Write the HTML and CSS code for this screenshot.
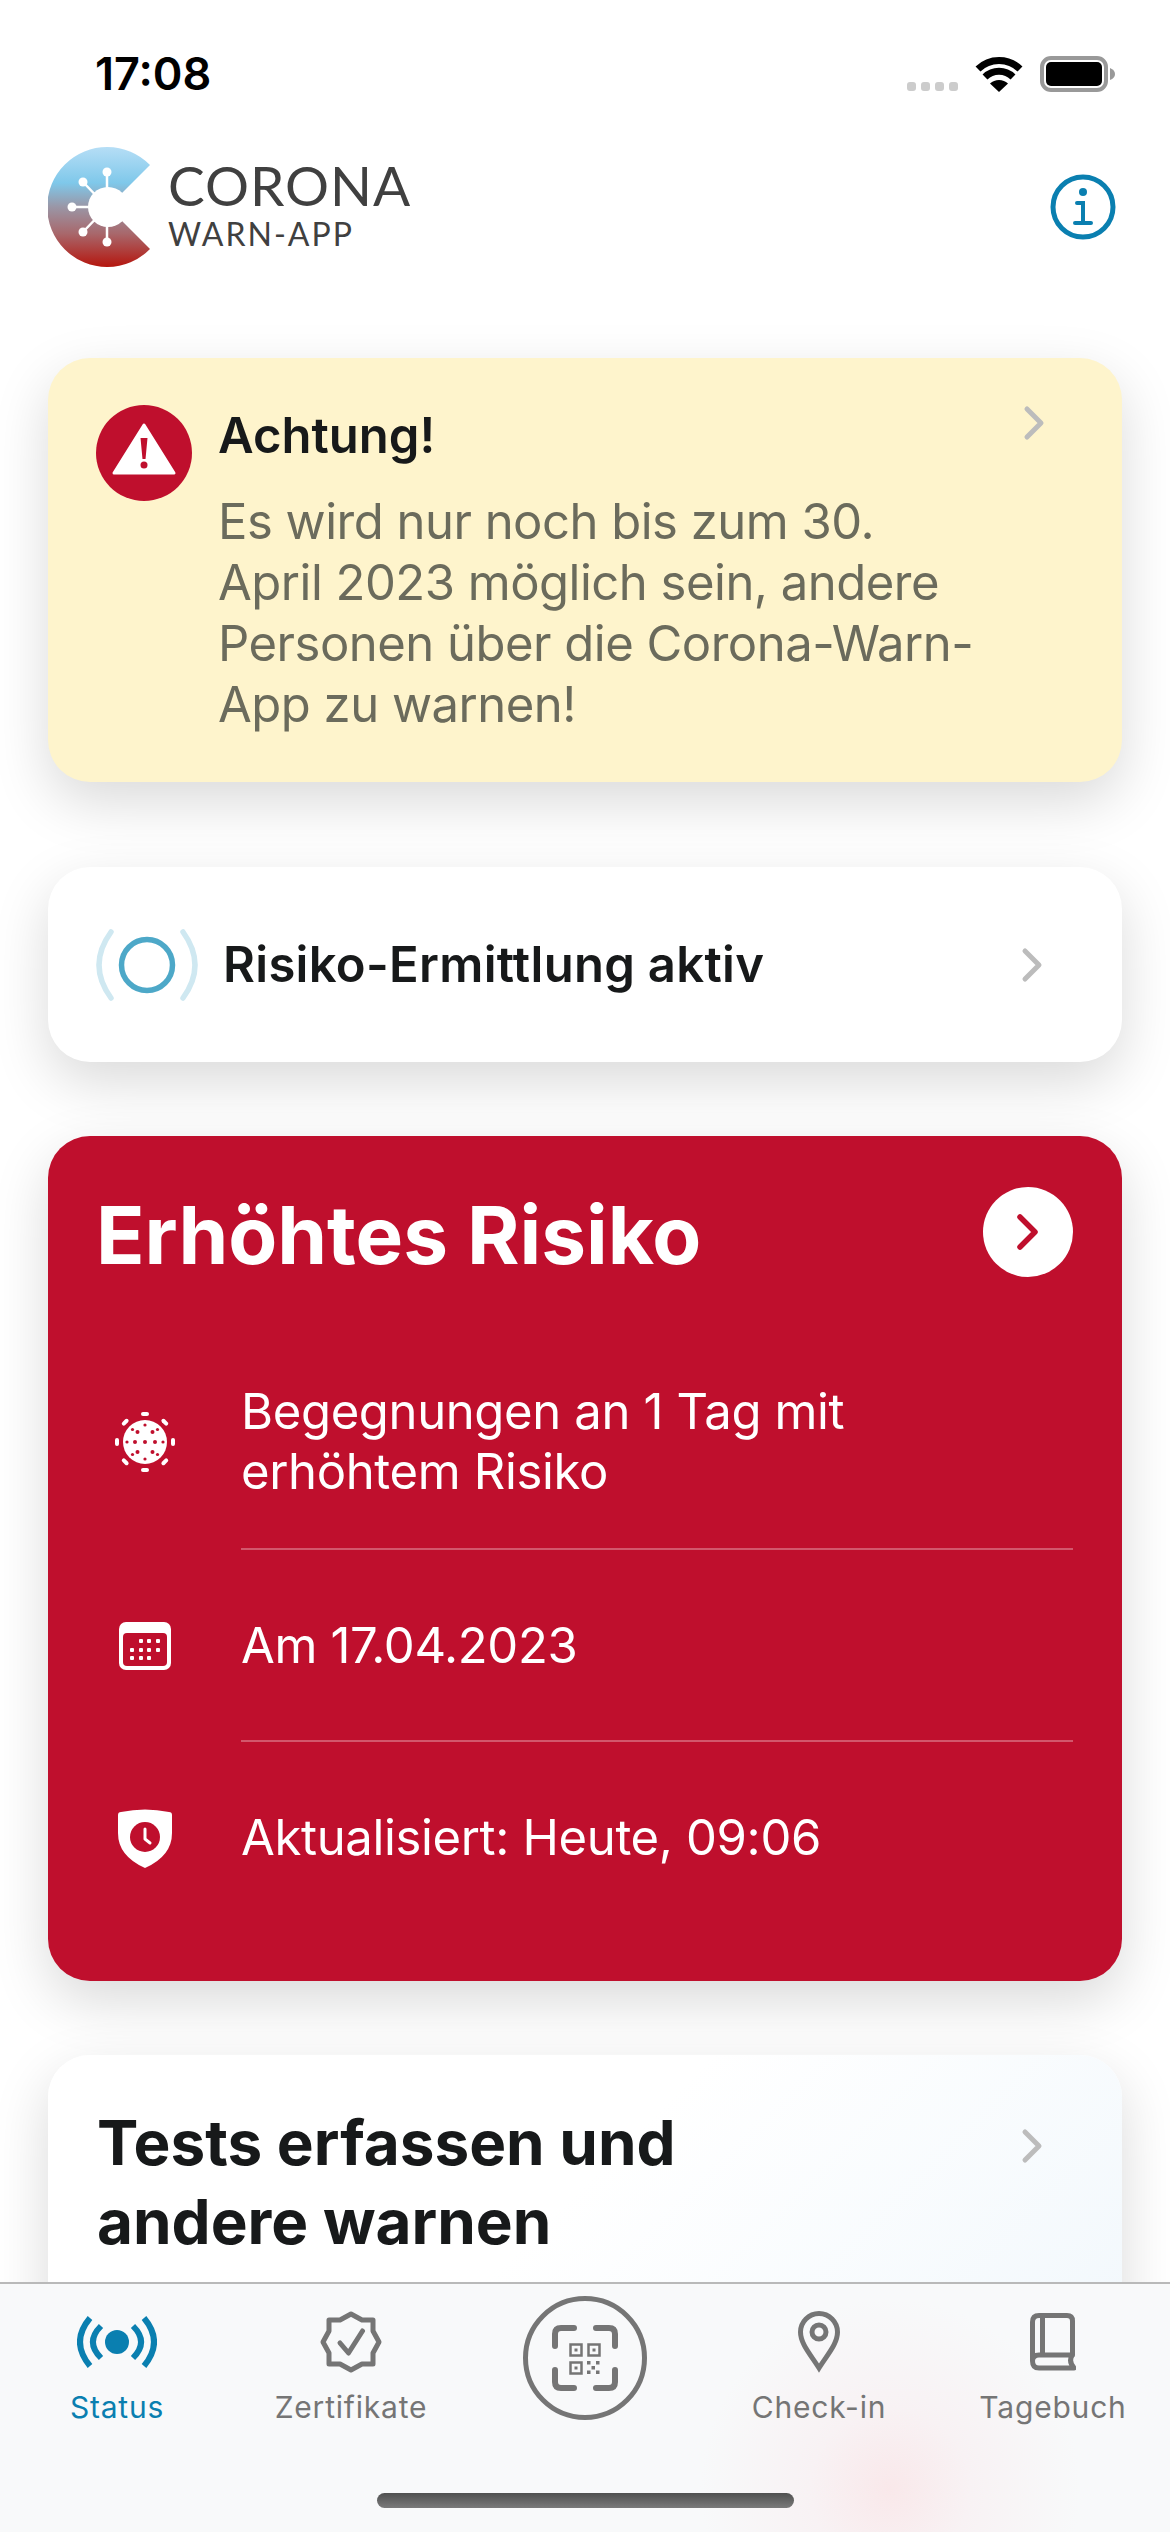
FILE: index.html
```html
<!DOCTYPE html>
<html lang="de">
<head>
    <meta charset="UTF-8">
    <title>Corona-Warn-App</title>
    <link rel="stylesheet" href="styles.css">
</head>
<body>

<div class="status-bar">
    <span class="clock">17:08</span>
    <div class="status-icons">
        <div class="signal"><i></i><i></i><i></i><i></i></div>
        <svg width="48" height="36" viewBox="0 0 48 36">
            <path d="M3 13A30 30 0 0 1 45 13M10 21A20 20 0 0 1 38 21" fill="none" stroke="#000" stroke-width="7"/>
            <path d="M15 27.500A13 13 0 0 1 33 27.500L24 36Z"/>
        </svg>
        <svg width="75" height="36" viewBox="0 0 75 36">
            <rect x="2" y="2" width="64" height="32" rx="9" fill="none" stroke="#999" stroke-width="4"/>
            <rect x="6" y="6" width="56" height="24" rx="5"/>
            <path d="M70 12Q75 14 75 18Q75 22 70 24Z" fill="#999"/>
        </svg>
    </div>
</div>

<header class="app-header">
    <div class="logo">
        <svg width="124" height="120" viewBox="0 0 124 120">
            <defs>
                <linearGradient id="logoFill" x1="0" y1="0" x2="0" y2="1">
                    <stop offset="0" stop-color="#b6def6"/>
                    <stop offset="0.3" stop-color="#7fc8ea"/>
                    <stop offset="0.5" stop-color="#9a96a6"/>
                    <stop offset="0.72" stop-color="#a8686c"/>
                    <stop offset="1" stop-color="#b5160e"/>
                </linearGradient>
            </defs>
            <path d="M102 18A60 60 0 1 0 102 102L60 60Z" fill="url(#logoFill)"/>
            <circle cx="60" cy="60" r="20" fill="#fff"/>
            <path d="M59 60V25M59 60L35 35M59 60H24M59 60L35 85M59 60V95" stroke="#fff" stroke-width="2.500"/>
            <g fill="#fff">
                <circle cx="59" cy="25" r="4.500"/>
                <circle cx="35" cy="35" r="4.500"/>
                <circle cx="24" cy="60" r="4.500"/>
                <circle cx="35" cy="85" r="4.500"/>
                <circle cx="59" cy="95" r="4.500"/>
            </g>
        </svg>
        <div class="logo-text">
            <div class="logo-name">CORONA</div>
            <div class="logo-sub">WARN-APP</div>
        </div>
    </div>
    <svg width="66" height="66" viewBox="-33 -33 66 66" fill="none" stroke="#0a7fb0" stroke-width="5">
        <circle r="30"/>
        <path d="M-6 -4H0V16M-8 16H8" stroke-width="4" stroke-linecap="round"/>
        <circle cy="-15" r="4" fill="#0a7fb0" stroke="none"/>
    </svg>
</header>

<main class="cards">
    <section class="card card-notice">
        <svg class="notice-icon" width="96" height="96" viewBox="0 0 96 96">
            <circle cx="48" cy="48" r="48" fill="#bf0f2d"/>
            <path d="M48 20L78 68H18Z" fill="#fff" stroke="#fff" stroke-width="3" stroke-linejoin="round"/>
            <path d="M44.500 33H51.500L49.500 54H46.500Z" fill="#bf0f2d"/>
            <circle cx="48" cy="60" r="3.500" fill="#bf0f2d"/>
        </svg>
        <div class="notice-text">
            <h3>Achtung!</h3>
            <p>Es wird nur noch bis zum 30.<br>April 2023 möglich sein, andere<br>Personen über die Corona-Warn-<br>App zu warnen!</p>
        </div>
        <svg class="chevron" width="24" height="36" viewBox="0 0 24 36">
            <path d="M5 4L19 18L5 32" fill="none" stroke="#bcbcbc" stroke-width="5" stroke-linecap="round" stroke-linejoin="round"/>
        </svg>
    </section>

    <section class="card card-tracing">
        <svg width="102" height="72" viewBox="0 0 102 72" fill="none">
            <circle cx="51" cy="36" r="25.500" stroke="#4da8c8" stroke-width="5.500"/>
            <path d="M15 3Q-9 36 15 69M87 3Q111 36 87 69" stroke="#cfe8f1" stroke-width="5.500" stroke-linecap="round"/>
        </svg>
        <span class="tracing-label">Risiko-Ermittlung aktiv</span>
        <svg class="chevron" width="24" height="36" viewBox="0 0 24 36">
            <path d="M5 4L19 18L5 32" fill="none" stroke="#bcbcbc" stroke-width="5" stroke-linecap="round" stroke-linejoin="round"/>
        </svg>
    </section>

    <section class="card card-risk">
        <div class="risk-head">
            <h2>Erhöhtes Risiko</h2>
            <div class="risk-button">
                <svg width="24" height="38" viewBox="0 0 24 38">
                    <path d="M4 4L19 19L4 34" fill="none" stroke="#bf0f2d" stroke-width="5.500" stroke-linecap="round" stroke-linejoin="round"/>
                </svg>
            </div>
        </div>

        <div class="risk-row risk-row-tall">
            <div class="risk-icon">
                <svg width="60" height="60" viewBox="-30 -30 60 60" fill="#fff">
                    <circle r="22"/>
                    <g>
                        <rect x="-4" y="-30" width="8" height="4" rx="2"/>
                        <rect x="-4" y="26" width="8" height="4" rx="2"/>
                        <rect x="-30" y="-4" width="4" height="8" rx="2"/>
                        <rect x="26" y="-4" width="4" height="8" rx="2"/>
                        <rect x="-4" y="-30" width="8" height="4" rx="2" transform="rotate(45)"/>
                        <rect x="-4" y="-30" width="8" height="4" rx="2" transform="rotate(135)"/>
                        <rect x="-4" y="-30" width="8" height="4" rx="2" transform="rotate(225)"/>
                        <rect x="-4" y="-30" width="8" height="4" rx="2" transform="rotate(315)"/>
                    </g>
                    <g fill="#bf0f2d">
                        <circle r="2"/><circle cx="-10" r="2"/><circle cx="10" r="2"/><circle cx="-18" r="1.600"/><circle cx="18" r="1.600"/>
                        <circle cy="-10" cx="-7.500" r="2"/><circle cy="-10" cx="7.500" r="2"/><circle cy="10" cx="-7.500" r="2"/><circle cy="10" cx="7.500" r="2"/>
                        <circle cy="-17" r="1.600"/><circle cy="17" r="1.600"/>
                        <circle cx="-12.500" cy="-12.500" r="1.600"/><circle cx="12.500" cy="-12.500" r="1.600"/><circle cx="-12.500" cy="12.500" r="1.600"/><circle cx="12.500" cy="12.500" r="1.600"/>
                    </g>
                </svg>
            </div>
            <div class="risk-text">Begegnungen an 1 Tag mit<br>erhöhtem Risiko</div>
        </div>

        <div class="risk-row">
            <div class="risk-icon">
                <svg width="52" height="48" viewBox="0 0 52 48">
                    <rect width="52" height="48" rx="7" fill="#fff"/>
                    <rect x="4" y="11" width="44" height="33" rx="4" fill="#bf0f2d"/>
                    <g fill="#fff">
                        <rect x="20" y="17" width="4" height="4" rx="1"/><rect x="28" y="17" width="4" height="4" rx="1"/><rect x="37" y="17" width="4" height="4" rx="1"/>
                        <rect x="11" y="26" width="4" height="4" rx="1"/><rect x="20" y="26" width="4" height="4" rx="1"/><rect x="28" y="26" width="4" height="4" rx="1"/><rect x="37" y="26" width="4" height="4" rx="1"/>
                        <rect x="11" y="34" width="4" height="4" rx="1"/><rect x="20" y="34" width="4" height="4" rx="1"/><rect x="28" y="34" width="4" height="4" rx="1"/>
                    </g>
                </svg>
            </div>
            <div class="risk-text">Am 17.04.2023</div>
        </div>

        <div class="risk-row">
            <div class="risk-icon">
                <svg width="54" height="59" viewBox="0 0 54 59">
                    <path d="M0 6Q0 3 3 3Q27 -2 51 3Q54 3 54 6V24Q54 47 27 59Q0 47 0 24Z" fill="#fff"/>
                    <circle cx="27" cy="28" r="15" fill="#bf0f2d"/>
                    <path d="M27 20V30L32 34" fill="none" stroke="#fff" stroke-width="3" stroke-linecap="round" stroke-linejoin="round"/>
                </svg>
            </div>
            <div class="risk-text">Aktualisiert: Heute, 09:06</div>
        </div>
    </section>

    <section class="card card-tests">
        <h2>Tests erfassen und<br>andere warnen</h2>
        <svg class="chevron" width="24" height="36" viewBox="0 0 24 36">
            <path d="M5 4L19 18L5 32" fill="none" stroke="#bcbcbc" stroke-width="5" stroke-linecap="round" stroke-linejoin="round"/>
        </svg>
    </section>
</main>

<nav class="tab-bar">
    <div class="tab tab-active">
        <div class="tab-icon">
            <svg width="80" height="54" viewBox="-40 -27 80 54" fill="none" stroke="#0a7fb0" stroke-width="6">
                <ellipse rx="12" ry="12" fill="#0a7fb0" stroke="none"/>
                <path d="M-16 -16Q-32 0 -16 16M16 -16Q32 0 16 16M-27 -24Q-47 0 -27 24M27 -24Q47 0 27 24"/>
            </svg>
        </div>
        <span>Status</span>
    </div>
    <div class="tab">
        <div class="tab-icon">
            <svg width="66" height="66" viewBox="-33 -33 66 66" fill="none" stroke="#757575" stroke-width="5" stroke-linejoin="round" stroke-linecap="round">
                <path d="M0 -28L11 -22H22V-11L28 0L22 11V22H11L0 28L-11 22H-22V11L-28 0L-22 -11V-22H-11Z"/>
                <path d="M-11 1L-2.500 11L11.500 -11"/>
            </svg>
        </div>
        <span>Zertifikate</span>
    </div>
    <div class="tab tab-scan">
        <svg width="124" height="124" viewBox="-62 -62 124 124" fill="none" stroke="#757575">
            <circle r="59.500" stroke-width="5"/>
            <path d="M-11 -30H-24Q-30 -30 -30 -24V-12M11 -30H24Q30 -30 30 -24V-12M-11 30H-24Q-30 30 -30 24V12M11 30H24Q30 30 30 24V12" stroke-width="6" stroke-linecap="round"/>
            <g stroke-width="2.500">
                <rect x="-14.500" y="-13.500" width="11" height="11"/>
                <rect x="3.500" y="-13.500" width="11" height="11"/>
                <rect x="-14.500" y="4.500" width="11" height="11"/>
            </g>
            <g fill="#757575" stroke="none">
                <rect x="-10.500" y="-9.500" width="3" height="3"/>
                <rect x="7.500" y="-9.500" width="3" height="3"/>
                <rect x="-10.500" y="8.500" width="3" height="3"/>
                <rect x="2" y="3" width="3.500" height="3.500"/>
                <rect x="11" y="3" width="3.500" height="3.500"/>
                <rect x="6.500" y="8" width="3.500" height="3.500"/>
                <rect x="2" y="12.500" width="3.500" height="3.500"/>
                <rect x="11" y="12.500" width="3.500" height="3.500"/>
            </g>
        </svg>
    </div>
    <div class="tab">
        <div class="tab-icon">
            <svg width="42" height="62" viewBox="0 0 42 62" fill="none" stroke="#757575" stroke-width="5">
                <path d="M21 57C13 44 2.500 33 2.500 21A18.500 18.500 0 0 1 39.500 21C39.500 33 29 44 21 57Z"/>
                <circle cx="21" cy="21" r="7"/>
            </svg>
        </div>
        <span>Check-in</span>
    </div>
    <div class="tab">
        <div class="tab-icon">
            <svg width="46" height="58" viewBox="0 0 46 58" fill="none" stroke="#757575" stroke-width="5" stroke-linejoin="round">
                <path d="M9 2.500H37Q42.500 2.500 42.500 8V42H9Q2.500 42 2.500 48Q2.500 55 9 55H44Q38 48 42.500 42"/>
                <path d="M2.500 48V9Q2.500 2.500 9 2.500M12.500 3V42"/>
            </svg>
        </div>
        <span>Tagebuch</span>
    </div>
    <div class="home-indicator"></div>
</nav>

</body>
</html>
```

FILE: styles.css
```css
* {
    box-sizing: border-box;
}
html, body {
    margin: 0;
    height: 2532px;
    overflow: hidden;
}
body {
    position: relative;
    font-family: Inter, "Noto Sans", sans-serif;
    background-color: #fff;
    color: #17191a;
}
h2, h3, p {
    margin: 0;
}
svg {
    display: block;
    flex: none;
}

.status-bar {
    height: 100px;
    padding: 51px 55px 0 95px;
    display: flex;
    justify-content: space-between;
    align-items: flex-start;
}
.clock {
    font-size: 45px;
    line-height: 46px;
    font-weight: 600;
    color: #000;
}
.status-icons {
    display: flex;
    align-items: flex-end;
    gap: 17px;
    padding-top: 5px;
}
.signal {
    display: flex;
    gap: 5px;
    padding-bottom: 1px;
}
.signal i {
    width: 9px;
    height: 9px;
    border-radius: 3px;
    background: #ccc;
}

.app-header {
    height: 120px;
    margin-top: 47px;
    padding: 0 54px 0 48px;
    display: flex;
    justify-content: space-between;
    align-items: center;
}
.logo {
    display: flex;
    align-items: center;
}
.logo-text {
    margin-left: -4px;
    padding-bottom: 6px;
    color: #404040;
    font-family: Lato, sans-serif;
}
.logo-name {
    font-size: 55px;
    line-height: 54px;
    letter-spacing: 1px;
    margin-bottom: 6px;
}
.logo-sub {
    font-size: 32px;
    line-height: 32px;
    letter-spacing: 2px;
}

.cards {
    margin-top: 91px;
    padding: 0 48px;
    display: flex;
    flex-direction: column;
    gap: 74px;
}
.card {
    border-radius: 42px;
    background: #fff;
    box-shadow: 0 20px 56px rgba(0, 0, 0, 0.15);
    display: flex;
    align-items: flex-start;
}

.card-notice {
    height: 424px;
    margin-bottom: 11px;
    padding: 47px 76px 0 48px;
    background: #fef4cc;
}
.notice-text {
    flex: 1;
    margin-left: 26px;
}
.notice-text h3 {
    font-size: 49px;
    line-height: 61px;
    font-weight: 600;
    margin-bottom: 25px;
}
.notice-text p {
    font-size: 49px;
    line-height: 61px;
    letter-spacing: -0.5px;
    color: #6b6b5c;
}

.card-tracing {
    height: 195px;
    padding: 0 78px 0 48px;
    align-items: center;
}
.tracing-label {
    flex: 1;
    margin-left: 25px;
    font-size: 49px;
    font-weight: 600;
    letter-spacing: 0.3px;
}

.card-risk {
    display: block;
    height: 845px;
    padding: 51px 49px 0 48px;
    background: #bf0f2d;
    color: #fff;
}
.risk-head {
    height: 90px;
    margin-bottom: 39px;
    display: flex;
    justify-content: space-between;
    align-items: center;
}
.risk-head h2 {
    margin-top: 5px;
    font-size: 80px;
    line-height: 90px;
    font-weight: 700;
}
.risk-button {
    width: 90px;
    height: 90px;
    border-radius: 50%;
    background: #fff;
    display: flex;
    align-items: center;
    justify-content: center;
}
.risk-row {
    display: flex;
    align-items: flex-start;
}
.risk-icon {
    width: 97px;
    height: 60px;
    margin: 66px 48px 0 0;
    display: flex;
    align-items: center;
    justify-content: center;
}
.risk-row-tall .risk-icon {
    height: 120px;
}
.risk-text {
    flex: 1;
    padding: 66px 0 64px;
    font-size: 49px;
    line-height: 60px;
    letter-spacing: -0.35px;
    border-bottom: 2px solid rgba(255, 255, 255, 0.3);
}
.risk-row-tall .risk-text {
    padding-bottom: 46px;
}
.risk-row:last-child .risk-text {
    border-bottom: 0;
}

.card-tests {
    height: 400px;
    padding: 48px 78px 0 49px;
    background: linear-gradient(135deg, #fff 45%, #f0f7fc 100%);
    justify-content: space-between;
}
.card-tests h2 {
    font-size: 62px;
    line-height: 79px;
    font-weight: 700;
}
.card-tests .chevron {
    margin-top: 25px;
}

.tab-bar {
    position: absolute;
    left: 0;
    right: 0;
    bottom: 0;
    height: 250px;
    border-top: 2px solid #b9b9b9;
    background: radial-gradient(circle at 890px 205px, #f9e8ea 0, #f8f2f4 80px, rgba(248, 249, 250, 0) 190px), #f8f9fa;
    display: grid;
    grid-template-columns: repeat(5, 234px);
}
.tab {
    display: flex;
    flex-direction: column;
    align-items: center;
    color: #757575;
    font-size: 30px;
    line-height: 36px;
    letter-spacing: 0.8px;
}
.tab-icon {
    height: 72px;
    margin-top: 22px;
    margin-bottom: 11px;
    display: flex;
    align-items: center;
    justify-content: center;
}
.tab-active {
    color: #0a7fb0;
}
.tab-scan {
    padding-top: 12px;
}
.home-indicator {
    position: absolute;
    left: 377px;
    top: 209px;
    width: 417px;
    height: 15px;
    border-radius: 8px;
    background: linear-gradient(#505050, #7a7a7a);
}
```
